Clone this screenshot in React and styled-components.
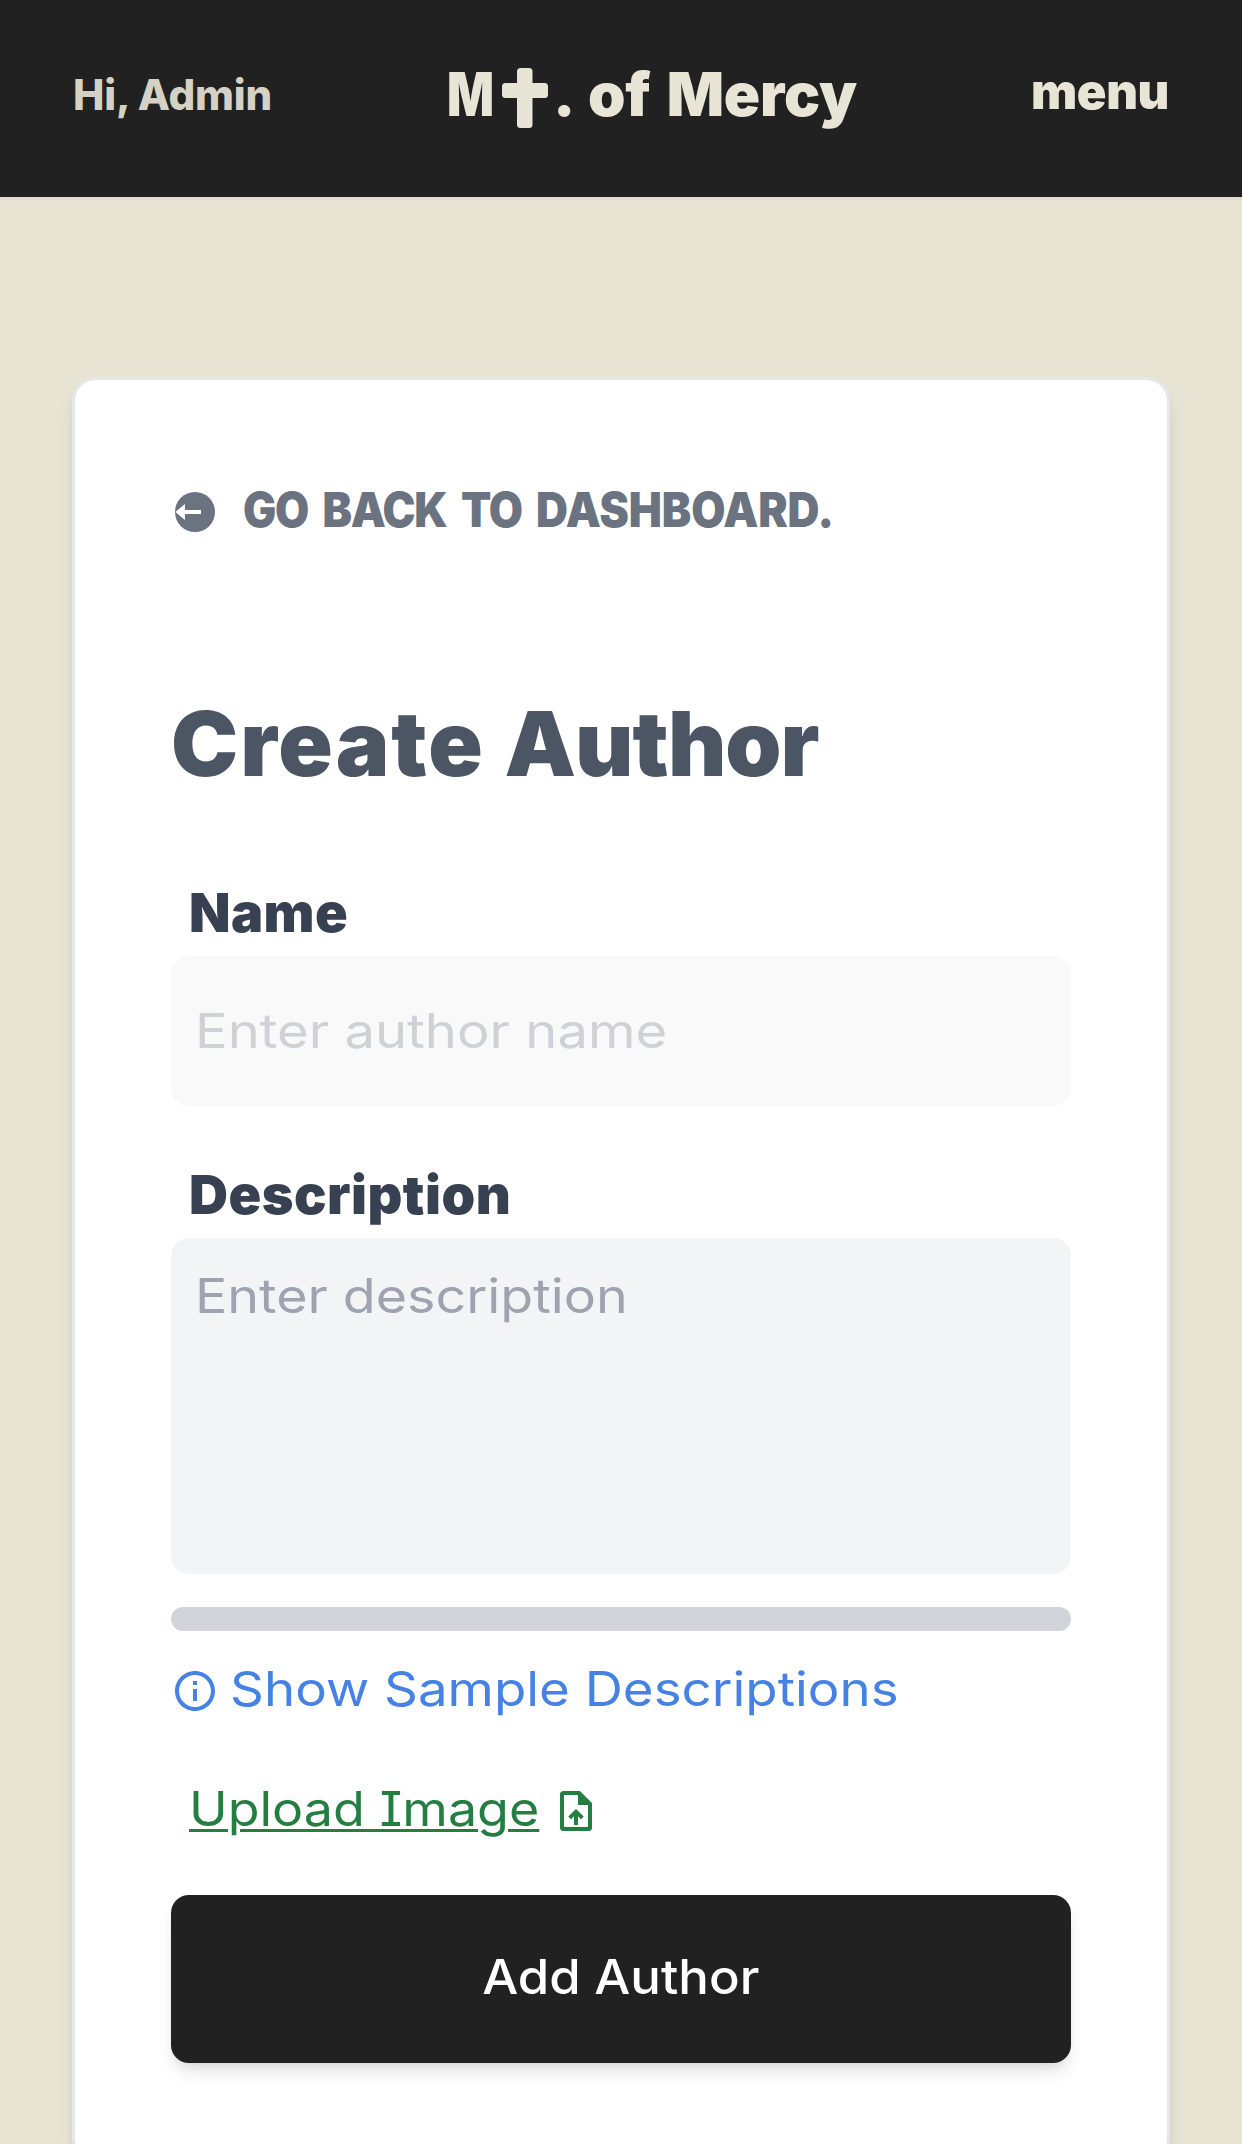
import React from "react";
import styled, { createGlobalStyle } from "styled-components";

const GlobalStyle = createGlobalStyle`
  *, *::before, *::after { box-sizing: border-box; }
  html, body { margin: 0; background: #e7e4d4; }
  body, input, textarea, button { font-family: Inter, "Liberation Sans", sans-serif; }
`;

const Page = styled.div`
  height: 2144px;
  overflow: hidden;
  background: #e7e4d4;
`;

const Header = styled.header`
  display: grid;
  grid-template-columns: 374px 1fr auto;
  align-items: center;
  height: 200px;
  padding: 0 73px 8px;
  background: #212121;
  border-bottom: 3px solid #e3dbd2;
  color: #e8e5d6;
  font-weight: 800;
  line-height: 1.2;
`;

const Greeting = styled.span`
  padding-top: 2px;
  font-size: 42px;
  letter-spacing: -0.2px;
  color: #d5d2c5;
`;

const Logo = styled.a`
  display: flex;
  align-items: center;
  font-size: 60px;
  white-space: nowrap;
  svg { display: block; margin: 7px 5px 0 8px; }
`;

const LogoInitial = styled.span`
  width: 47px;
  padding-bottom: 2px;
  font-weight: 900;
  transform: scaleX(0.82);
  transform-origin: left;
`;

const LogoText = styled.span`
  padding-bottom: 2px;
  font-weight: 900;
  letter-spacing: -0.2px;
  word-spacing: 4.5px;
`;

const Menu = styled.span`
  padding-bottom: 4px;
  font-size: 49px;
  font-weight: 900;
  letter-spacing: -0.4px;
`;

const Card = styled.main`
  display: flex;
  flex-direction: column;
  margin: 177px 72px 0;
  padding: 96px;
  background: #fff;
  border: 3px solid #e5e7eb;
  border-radius: 24px;
  box-shadow: 0 12px 18px -3px rgba(0, 0, 0, 0.1), 0 6px 12px -6px rgba(0, 0, 0, 0.1);
`;

const BackLink = styled.a`
  display: flex;
  align-items: center;
  gap: 28px;
  height: 67px;
  padding-left: 4px;
  color: #6b7280;
  font-size: 48px;
  font-weight: 900;
  white-space: nowrap;
  svg { display: block; margin-top: 5px; flex: none; }
`;

const BackText = styled.span`
  word-spacing: 7.3px;
  transform: scaleX(0.92);
  transform-origin: left;
`;

const Title = styled.h1`
  margin: 156px 0 83px;
  color: #4b5563;
  font-size: 90px;
  font-weight: 900;
  line-height: 90px;
`;

const Word = styled.span`
  letter-spacing: ${(p) => p.$tracking};
`;

const Label = styled.label`
  display: block;
  margin: 0 0 3px;
  padding: 1px 0 0 18px;
  color: #374151;
  font-size: 54px;
  font-weight: 900;
  line-height: 80px;
  letter-spacing: ${(p) => p.$tracking};
`;

const Field = styled.div`
  height: ${(p) => p.$height};
  padding: ${(p) => p.$pad} 24px 0;
  background: ${(p) => p.$fill};
  border-radius: 18px;
  overflow: hidden;
`;

const Control = styled.input`
  display: block;
  width: 88%;
  height: ${(p) => p.$height || "72px"};
  padding: 0;
  border: 0;
  outline: 0;
  resize: none;
  background: transparent;
  font-size: 48px;
  line-height: 72px;
  transform: scaleX(${(p) => p.$stretch});
  transform-origin: left;
  &::placeholder { color: ${(p) => p.$ink}; opacity: 1; }
`;

const FieldGroup = styled.div`
  & + & { margin-top: 48px; }
`;

const Meter = styled.div`
  height: 24px;
  margin: 33px 0 21px;
  background: #d1d5db;
  border-radius: 12px;
`;

const Action = styled.a`
  display: flex;
  align-items: center;
  height: 72px;
  font-size: 48px;
  line-height: 72px;
  white-space: nowrap;
  svg { display: block; margin-top: 6px; flex: none; }
`;

const SampleLink = styled(Action)`
  gap: 11px;
  color: #4682e3;
`;

const UploadLink = styled(Action)`
  margin: 48px 0 51px;
  padding-left: 18px;
  color: #247d41;
`;

const Stretch = styled.span`
  display: inline-block;
  width: ${(p) => p.$width || "auto"};
  padding-top: ${(p) => p.$drop || "0"};
  transform: scaleX(${(p) => p.$by});
  transform-origin: ${(p) => p.$origin || "left"};
`;

const Underlined = styled(Stretch)`
  font-feature-settings: "cv08";
  text-decoration: underline;
  text-decoration-thickness: 3px;
  text-underline-offset: 3px;
`;

const Submit = styled.button`
  height: 168px;
  padding: 0 0 5px;
  border: 0;
  border-radius: 18px;
  background: #212121;
  color: #fff;
  font-size: 48px;
  font-weight: 500;
  box-shadow: 0 12px 18px -3px rgba(0, 0, 0, 0.1), 0 6px 12px -6px rgba(0, 0, 0, 0.1);
`;

const CrossIcon = () => (
  <svg width="46" height="60" viewBox="0 0 46 60" fill="currentColor">
    <rect x="15" width="15.5" height="60" rx="3.5" />
    <rect y="15" width="46" height="15" rx="3.5" />
  </svg>
);

const BackIcon = () => (
  <svg width="40" height="40" viewBox="0 0 40 40">
    <circle cx="20" cy="20" r="20" fill="currentColor" />
    <path d="M0.3 20 10 12V18H26V22H10V28Z" fill="#fff" />
  </svg>
);

const InfoIcon = () => (
  <svg width="48" height="48" viewBox="0 0 24 24" fill="currentColor">
    <path d="M11 7h2v2h-2zm0 4h2v6h-2zm1-9C6.48 2 2 6.48 2 12s4.48 10 10 10 10-4.48 10-10S17.52 2 12 2zm0 18c-4.41 0-8-3.59-8-8s3.59-8 8-8 8 3.59 8 8-3.59 8-8 8z" />
  </svg>
);

const UploadIcon = () => (
  <svg width="32" height="40" viewBox="0 0 32 40" fill="currentColor">
    <path
      fillRule="evenodd"
      d="M3.5 0H20L32 12V36.5a3.5 3.5 0 0 1-3.5 3.5H3.5A3.5 3.5 0 0 1 0 36.5V3.5A3.5 3.5 0 0 1 3.5 0ZM4 4V36H28V14H18V4Z"
    />
    <path d="M16 18 23.7 25.5 21 28.2 18 25.3V34H14V25.3L11 28.2 8.3 25.5Z" />
  </svg>
);

export default function App() {
  return (
    <Page>
      <GlobalStyle />
      <Header>
        <Greeting>Hi, Admin</Greeting>
        <Logo>
          <LogoInitial>M</LogoInitial>
          <CrossIcon />
          <LogoText>. of Mercy</LogoText>
        </Logo>
        <Menu>menu</Menu>
      </Header>
      <Card>
        <BackLink>
          <BackIcon />
          <BackText>
            <Word $tracking="-1.3px">GO BACK TO </Word>
            <Word $tracking="-0.1px">DASHBOARD.</Word>
          </BackText>
        </BackLink>
        <Title>
          <Word $tracking="1.9px">Create </Word>
          <Word $tracking="-1px">Author</Word>
        </Title>
        <FieldGroup>
          <Label htmlFor="name" $tracking="0.4px">Name</Label>
          <Field $height="150px" $pad="39px" $fill="#f9f9f9">
            <Control id="name" placeholder="Enter author name" $stretch={1.132} $ink="#cfd1d6" />
          </Field>
        </FieldGroup>
        <FieldGroup>
          <Label htmlFor="description" $tracking="0.5px">Description</Label>
          <Field $height="336px" $pad="22px" $fill="#f3f4f6">
            <Control
              as="textarea"
              id="description"
              placeholder="Enter description"
              $height="288px"
              $stretch={1.12}
              $ink="#9ea4af"
            />
          </Field>
        </FieldGroup>
        <Meter />
        <SampleLink>
          <InfoIcon />
          <Stretch $by={1.101} $drop="2px">Show Sample Descriptions</Stretch>
        </SampleLink>
        <UploadLink>
          <Underlined $by={1.083} $width="371px" $drop="2px">Upload Image</Underlined>
          <UploadIcon />
        </UploadLink>
        <Submit type="button">
          <Stretch $by={1.06} $origin="center">Add Author</Stretch>
        </Submit>
      </Card>
    </Page>
  );
}
